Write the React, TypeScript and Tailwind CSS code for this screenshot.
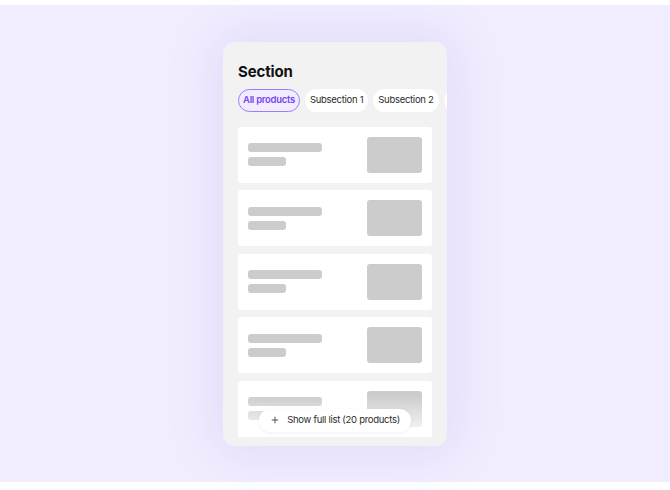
import { Plus } from "lucide-react"

const tabs = ["All products", "Subsection 1", "Subsection 2", "Subsection 3"]

function SkeletonRow() {
  return (
    <div className="flex h-14 items-center justify-between rounded-[3px] bg-white pl-[10px] pr-[10px]">
      <div className="flex flex-col gap-[5px]">
        <div className="h-[9px] w-[74px] rounded-[3px] bg-[#cccccc]" />
        <div className="h-[9px] w-[38px] rounded-[3px] bg-[#cccccc]" />
      </div>
      <div className="h-9 w-[55px] rounded-[3px] bg-[#cccccc]" />
    </div>
  )
}

export default function App() {
  return (
    <div className="bg-white py-[5px] pb-[8px]" style={{ fontFamily: "Inter, 'Noto Sans', sans-serif" }}>
      <div className="flex h-[477px] items-center justify-center bg-[#f1edfe]">
        <div className="w-[224px] overflow-hidden rounded-[12px] bg-[#f2f2f2] px-[15px] pb-[9px] pt-[20px] shadow-[0_0_50px_8px_rgba(120,90,220,0.13)]">
          <h1 className="text-[15px] font-bold leading-[20px] tracking-[-0.01em] text-[#111111]">Section</h1>

          <div className="-mr-[15px] mt-[7px] flex gap-[5px] overflow-hidden">
            {tabs.map((t, i) =>
              i === 0 ? (
                <div
                  key={t}
                  className="flex h-[23px] shrink-0 items-center rounded-full border border-[#9f7cff] bg-[#f1ecff] px-[4px] text-[9.5px] font-semibold tracking-[-0.03em] text-[#7a45f0]"
                >
                  {t}
                </div>
              ) : (
                <div
                  key={t}
                  className="flex h-[23px] shrink-0 items-center rounded-full bg-white px-[5px] text-[9.5px] tracking-[-0.03em] text-[#2a2a2a]"
                >
                  {t}
                </div>
              ),
            )}
          </div>

          <div className="relative mt-[15px]">
            <div className="flex flex-col gap-[7.5px]">
              {[0, 1, 2, 3, 4].map((i) => (
                <SkeletonRow key={i} />
              ))}
            </div>
            <div className="absolute inset-x-0 bottom-0 h-[42px] bg-gradient-to-b from-white/0 to-white/95" />
            <div className="absolute inset-x-0 bottom-[5px] flex justify-center">
              <button className="flex h-[23px] items-center gap-[7px] rounded-full bg-white px-[11px] text-[9.5px] tracking-[-0.03em] text-[#2a2a2a] shadow-[0_1px_4px_rgba(0,0,0,0.06)]">
                <Plus size={10} strokeWidth={1.8} className="text-[#222222]" />
                Show full list (20 products)
              </button>
            </div>
          </div>
        </div>
      </div>
    </div>
  )
}
